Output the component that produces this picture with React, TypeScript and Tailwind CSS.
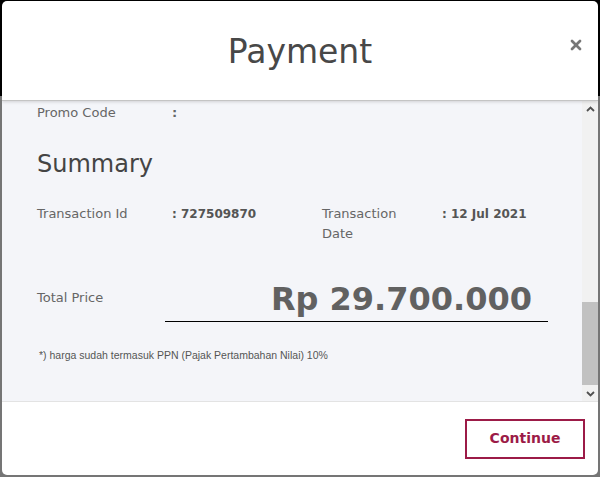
import { X } from 'lucide-react'

const font = { fontFamily: '"DejaVu Sans", "Noto Sans", sans-serif' }

function ScrollBar() {
  return (
    <div className="w-[16px] shrink-0 bg-[#f1f1f1] flex flex-col">
      <div className="h-[15px] flex items-center justify-center">
        <svg width="9" height="6" viewBox="0 0 9 6">
          <path d="M1 5 L4.5 1.5 L8 5" stroke="#505050" strokeWidth="1.8" fill="none" />
        </svg>
      </div>
      <div className="flex-1 flex flex-col justify-end pb-[1px]">
        <div className="h-[83px] bg-[#c1c1c1]" />
      </div>
      <div className="h-[15px] flex items-center justify-center">
        <svg width="9" height="6" viewBox="0 0 9 6">
          <path d="M1 1 L4.5 4.5 L8 1" stroke="#505050" strokeWidth="1.8" fill="none" />
        </svg>
      </div>
    </div>
  )
}

export default function App() {
  return (
    <div
      className="w-[600px] h-[477px] px-[2px] pt-[1px] pb-[2px] bg-[linear-gradient(#000_0_96px,#757575_96px)]"
      style={font}
    >
      <div className="h-full bg-white rounded-[5px] flex flex-col overflow-hidden">
        <header className="h-[100px] shrink-0 flex items-center justify-center relative border-b border-[#c4c4c4] shadow-[0_1px_3px_rgba(0,0,0,0.15)] z-10">
          <h1 className="text-[33px] text-[#484848] leading-[40px] mt-[2px]">Payment</h1>
          <button className="absolute right-[14px] top-[36px] text-[#777]">
            <X size={16} strokeWidth={4} />
          </button>
        </header>

        <div className="flex-1 flex bg-[#f4f5f9] min-h-0">
          <div className="flex-1 pl-[35px] pr-[34px] pt-[2px] text-[13px] text-[#666]">
            <div className="flex h-[20px] items-center">
              <span className="w-[135px]">Promo Code</span>
              <span className="font-bold">:</span>
            </div>

            <h2 className="text-[24px] text-[#444] mt-[23px] leading-[36px]">Summary</h2>

            <div className="flex mt-[22px] leading-[20px]">
              <div className="flex w-[285px]">
                <span className="w-[135px] shrink-0">Transaction Id</span>
                <span className="font-bold text-[12px] text-[#555]">: 727509870</span>
              </div>
              <div className="flex">
                <span className="w-[120px] shrink-0 pr-[40px]">Transaction Date</span>
                <span className="font-bold text-[12px] text-[#555]">: 12 Jul 2021</span>
              </div>
            </div>

            <div className="flex items-start mt-[44px]">
              <span className="w-[128px] shrink-0 leading-[20px]">Total Price</span>
              <div className="flex-1 border-b border-black text-right pr-[16px] -mt-[11px]">
                <span className="text-[32px] font-bold text-[#616161] leading-[44px]">Rp 29.700.000</span>
              </div>
            </div>

            <p
              className="text-[10.5px] text-[#555] mt-[26px] ml-[2px]"
              style={{ fontFamily: '"Liberation Sans", Arial, sans-serif' }}
            >
              *) harga sudah termasuk PPN (Pajak Pertambahan Nilai) 10%
            </p>
          </div>
          <ScrollBar />
        </div>

        <footer className="h-[74px] shrink-0 border-t border-[#e3e3e3] flex items-center justify-end pr-[13px]">
          <button className="w-[120px] h-[40px] border-2 border-[#9c1b47] text-[#9c1b47] text-[14px] font-bold">
            Continue
          </button>
        </footer>
      </div>
    </div>
  )
}
